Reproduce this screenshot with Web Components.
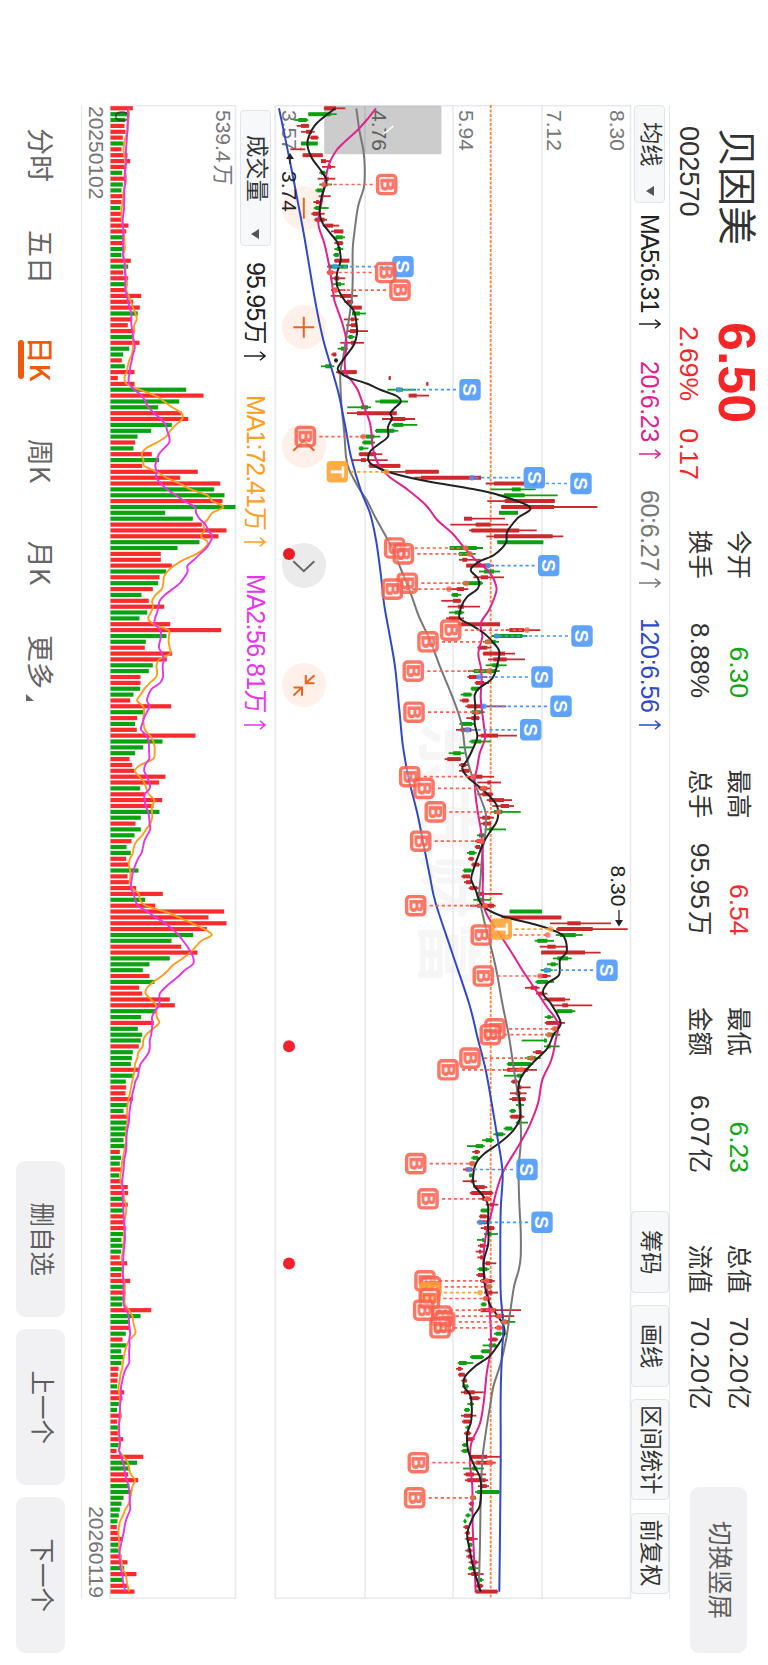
<!DOCTYPE html>
<html lang="zh-CN">
<head>
<meta charset="utf-8">
<title>贝因美 002570</title>
<style>
  html, body {
    margin: 0;
    background: #fff;
  }
  body {
    width: 768px;
    height: 1665px;
    overflow: hidden;
    font-family: "Liberation Sans", "Noto Sans CJK SC", sans-serif;
    color: #333;
  }
</style>
</head>
<body>
<stock-screen></stock-screen>

<script>
// Volumes, one per trading day: r = up, g = down, the number is the bar length
const VOLUME = `r67 g57 g44 r42 r45 r37 g39 r33 r51 r59 r45 g35 r47 g37 g33 r37 r33 g30 r33 r35 r54 r47 g37 r37 g39 g33
r61 g53 r38 r53 g45 r45 r92 r68 r88 g82 r63 r52 r72 g67 r87 g56 g38 r34 g43 r72 r22 r72 g227 r279 g206 g143 r213 r233
g184 g122 g81 r74 g69 r124 g146 r95 r262 r209 r329 g311 g342 r336 g375 g164 g247 r274 r348 r324 g267 g201 r151 r151 r184
g167 r147 g143 r127 g93 r115 r161 g110 g87 r179 r332 g168 g106 r103 r185 r169 g127 g115 r90 r90 g89 g69 r59 r182 g103
r80 g74 r79 r255 g156 g98 g74 r57 r65 r72 r165 r146 g89 r103 r155 r129 g147 g91 r75 g91 g72 r63 g48 g61 r47 r55 g84 r51
r55 r77 r157 g104 r134 r341 r294 r348 r289 g248 g183 r212 r261 g178 g117 g97 r117 g132 r86 r95 r178 r193 g137 g92 r130
g82 g95 g91 r85 g67 g64 g61 r86 g67 g46 r47 r45 r67 g51 g39 r51 g49 g47 g45 g39 g43 r28 g32 g28 r33 g26 r34 r52 r53 g39
r52 g39 r39 r39 r47 g38 g33 g37 g32 r28 r50 g37 r32 r59 g39 r45 g37 g35 r122 g90 g57 r57 g46 r36 g47 g32 g38 g33 r24 r22
r21 g20 r41 r36 g25 g20 r33 r20 g23 r23 r38 g26 r18 r98 g80 g57 r53 r83 g57 g63 g39 g33 g28 g25 g21 r19 r25 r37 g24 g25
r33 r51 g41 r78 g37 r51 r72`;

// Candles: colour, low, body bottom, body top, high
const CANDLES_EARLY = `r143,145,180,208 g97,97,164,182 g55,67,92,97 r62,75,98,100 r75,90,108,116 r100,105,125,128
g75,75,125,125 r43,74,76,88 r80,80,140,140 r135,135,150,165 r138,158,165,178 g130,135,148,150 r125,150,158,178
g130,145,155,168 g118,122,140,140 r128,135,140,164 r112,120,130,135 g113,118,130,158 r106,110,130,146 r115,118,146,153
r140,148,172,190 r165,174,202,202 g172,180,200,207 r175,182,200,202 g175,182,195,202 g172,175,188,188 r174,176,220,220
g153,160,216,216 r152,155,172,180 r162,175,190,208 g168,180,195,206 r165,172,185,208 r164,192,225,245 r205,213,230,232
r225,228,257,257 g228,228,252,270 r204,225,235,248 r210,225,240,242 r212,222,245,276 g214,218,230,236 r193,225,238,264
g185,195,210,215 r166,170,180,182 k174,176,184,186 g135,148,168,175 r180,185,242,242 r338,338,344,344 r451,451,457,457
g334,360,380,420 r398,398,422,459 g298,312,368,396 g214,255,276,285 r213,243,362,362 r318,345,388,417 g347,352,382,424
g297,300,355,367 g253,270,295,313 g258,262,290,297 g248,250,262,277 r248,250,300,319 r228,255,270,335 r278,280,373,373
r315,388,488,488 r415,435,615,615`;

const CANDLES_LATE = `r305,330,420,420 g322,383,410,455 g340,360,422,521 r310,362,512,512 r352,352,510,640 g345,345,402,402
r240,240,264,363 r199,275,320,373 r255,262,406,458 r307,330,506,538 g340,340,478,478 g197,197,278,297 g223,225,262,275
r225,235,250,290 r247,247,318,330 g285,300,330,348 r268,290,312,360 g235,238,293,297 r188,218,240,253 g202,205,222,232
r172,207,230,232 r191,222,240,288 g195,212,235,241 r186,195,225,240 r222,225,348,348 r365,376,420,469 g322,330,415,430
g297,303,335,345 r280,283,310,322 r296,298,363,393 r312,328,368,423 g305,325,345,368 g252,270,335,347 r250,255,280,310
r272,275,300,315 g260,262,285,290 g230,238,262,265 r227,235,253,256 r244,250,300,367 g258,263,290,302 r247,262,285,287
g226,233,265,270 r216,230,262,272 r280,290,342,399 g256,262,292,320 g225,240,242,268 g194,208,230,242 r182,190,230,231
r225,230,245,252 r225,235,255,260 r252,262,295,330 r280,310,320,351 r283,287,310,320 r280,295,325,328 r308,315,360,384
r325,350,375,390 g322,330,355,410 r287,295,318,330 r290,298,320,322 g302,315,325,366 g279,285,300,302 r272,278,295,303
r272,275,288,290 g249,255,272,278 r252,256,268,270 r262,265,285,290 g236,240,262,266 r232,236,258,258 r240,246,262,264
r254,258,280,284 r280,280,300,355 g268,280,300,321 r258,280,330,335 g377,377,474,474 r352,360,532,532 r498,550,590,681
r516,520,626,731 g515,528,575,596 g452,460,490,510 r467,490,515,550 r472,472,603,650 g507,520,552,563 g489,500,515,522
g470,480,500,506 r462,470,490,500 g454,458,492,510 r423,440,460,467 r456,462,480,490 r478,490,543,558 r505,535,552,625
g512,518,565,574 g482,490,500,508 r482,487,530,543 g500,508,522,525 g484,490,510,529 g413,480,488,488 g480,490,500,527
r447,455,472,480 g422,430,455,470 g368,372,440,448 r357,370,432,459 g360,400,415,418 r381,385,400,405 r400,405,412,440
r378,395,410,428 r376,384,424,426 g396,402,412,420 g376,380,392,396 r377,380,415,421 g395,400,412,432 g359,364,384,388
g328,335,358,364 g294,305,325,330 g249,275,297,302 r265,272,284,288 g262,266,282,286 g255,258,272,278 r237,245,265,270
g255,256,266,270 r236,260,270,278 r268,272,302,310 r257,262,325,328 r290,295,318,322 r305,318,328,343 g289,292,315,316
r285,288,308,315 r278,285,312,318 r290,300,330,332 g300,315,322,342 g279,295,300,302 r282,288,302,312 r275,285,292,298
r280,288,300,302 r296,305,318,337 g280,285,310,316 r277,282,298,300 r288,292,325,332 g302,308,320,325 r300,310,325,342
r296,300,316,320 g290,293,305,308 r283,290,335,411 r318,335,360,391 g350,355,372,394 r332,338,352,358 g330,335,352,372
r312,318,338,342 g296,315,335,340 g290,293,318,322 g258,262,296,300 g221,225,248,268 r216,222,232,237 r222,225,242,244
r232,236,248,250 g234,240,252,254 r231,240,272,299 r255,260,284,289 g250,258,265,270 g240,243,255,258 r231,240,262,277
r234,238,258,260 g244,248,254,258 r240,244,258,262 r248,252,268,272 g234,238,248,252 g232,236,250,252 r255,260,310,350
r262,275,325,335 g237,265,280,300 r239,245,270,306 r243,250,305,312 r282,290,308,315 g273,280,345,348 g258,260,275,277
r254,258,268,270 g255,257,264,266 g244,248,256,260 g238,240,246,248 r238,242,252,254 r242,246,256,258 r244,250,268,281
g252,255,264,266 r244,250,262,266 r247,252,262,268 r254,260,278,284 g252,256,275,283 r251,262,285,299 g276,280,294,299
r272,278,295,298 r272,275,340,342`;

// Moving averages as time,price pairs
const MA5 = `325,-146 370,-202 410,-226 440,-229 475,-216 505,-194 535,-174 550,-174 590,-187 640,-193 670,-184 700,-161
730,-139 780,-130 820,-141 860,-140 900,-119 930,-92 960,-84 1000,-81 1035,-91 1070,-116 1102,-138 1115,-134 1132,-109
1150,-54 1170,-9 1188,38 1205,50 1225,31 1240,19 1255,24 1280,12 1310,12 1330,-12 1355,-42 1380,-47 1395,-34 1415,11
1440,110 1470,281 1485,345 1522,438 1555,400 1595,370 1630,365 1665,330 1685,285 1710,260 1735,282 1765,282 1790,250
1820,232 1855,227 1875,262 1900,300 1925,325 1955,346 2000,338 2035,325 2065,285 2085,272 2120,274 2170,272 2210,280
2250,265 2280,250 2305,235 2330,250 2360,285 2390,318 2420,340 2460,340 2490,322 2525,300 2570,282 2620,265 2640,262
2670,275 2700,285 2725,305 2750,360 2770,440 2790,505 2810,540 2855,548 2880,528 2925,525 2950,490 2980,477 3010,500
3040,518 3072,530 3105,508 3145,490 3190,445 3230,412 3265,403 3310,408 3355,408 3395,385 3430,345 3460,302 3490,276
3525,268 3555,270 3585,295 3615,312 3670,312 3730,313 3780,300 3830,300 3870,305 3910,316 3940,335 3975,358 4005,360
4045,335 4070,315 4100,272 4130,243 4160,240 4190,260 4260,262 4300,250 4350,252 4400,272 4440,290 4515,288 4550,268
4600,250 4650,257 4710,270 4775,290`;

const MA20 = `325,-24 360,-52 390,-79 420,-112 450,-142 490,-164 540,-176 600,-186 670,-197 730,-179 790,-166 850,-156
900,-149 930,-139 980,-122 1030,-112 1080,-118 1120,-114 1140,-99 1170,-79 1210,-64 1270,-42 1340,-34 1370,-27 1400,-12
1430,16 1470,72 1515,125 1560,160 1600,205 1640,238 1680,275 1715,315 1760,337 1790,332 1830,315 1870,290 1910,295
1960,283 2000,290 2040,293 2090,290 2140,295 2180,300 2215,303 2260,287 2300,280 2340,272 2390,275 2440,282 2500,292
2570,296 2630,297 2670,296 2720,300 2750,312 2800,345 2850,378 2910,415 2970,455 3020,488 3070,522 3120,515 3180,502
3240,475 3310,462 3380,435 3440,402 3510,360 3570,338 3640,322 3710,305 3790,298 3830,302 3900,314 3980,320 4050,320
4120,308 4200,300 4270,288 4330,262 4390,258 4460,265 4580,266 4710,272 4775,275`;

const MA60 = `325,-83 390,-74 450,-62 500,-58 560,-60 620,-78 700,-89 750,-94 840,-94 900,-97 970,-107 1070,-122 1120,-131
1210,-128 1300,-119 1370,-114 1410,-104 1470,-72 1500,-52 1550,-27 1595,-2 1640,22 1710,52 1780,80 1850,105 1920,138
2000,168 2090,205 2170,232 2260,245 2330,265 2400,292 2440,305 2490,305 2550,296 2630,290 2690,286 2760,300 2830,318
2910,337 3010,355 3110,375 3210,390 3310,405 3410,411 3510,404 3610,406 3690,410 3770,410 3810,404 3860,390 3940,378
4020,366 4090,350 4160,328 4220,318 4300,305 4380,295 4500,290 4630,288 4775,284`;

const MA120 = `325,-315 500,-279 700,-241 900,-207 1020,-182 1170,-139 1270,-118 1370,-99 1470,-70 1540,-42 1620,-24
1720,-10 1810,0 1890,14 2000,33 2140,47 2240,57 2340,75 2440,100 2540,120 2630,138 2710,155 2860,205 3010,255 3110,280
3210,305 3310,323 3410,340 3470,350 3530,356 3630,350 3760,349 3880,350 3980,358 4060,354 4180,350 4380,350 4680,347
4775,346`;

// Trades: kind, day, badge price, fill price
const TRADES = `B,13,8,-181 S,27,57,-147 B,28,5,-162 B,31,48,-146 S,48,258,44 B,56,-236,-62 T,62,-140,8 S,64,591,450
S,63,451,264 B,75,32,245 B,76,58,258 S,78,494,312 B,81,70,247 B,82,25,195 B,89,200,429 S,90,594,338 B,91,132,313
B,96,88,315 S,97,474,285 S,102,531,300 B,103,90,278 S,106,440,250 B,114,77,268 B,116,120,300 B,120,154,343
B,125,110,293 B,136,95,303 B,141,292,491 T,140,352,500 S,147,669,487 B,148,298,468 B,157,333,512 B,158,319,495
B,162,258,443 B,164,192,412 B,180,95,264 S,181,429,255 B,186,132,310 S,190,474,288 B,200,123,308 B,201,140,313
T,202,138,288 B,203,136,305 B,205,119,325 B,206,173,345 B,207,182,362 B,208,168,345 B,231,103,320 B,237,92,266`;

const STEP = 5.863;
const dayX = i => 3.3 + i * STEP;
const split = text => text.trim().split(/\s+/);
const f = n => n.toFixed(1);

// Catmull-Rom spline through the points, as a path
function curve(points) {
  let d = `M${f(points[0][0])} ${f(points[0][1])}`;
  for (let i = 0; i < points.length - 1; i++) {
    const p0 = points[i - 1] || points[i];
    const p1 = points[i];
    const p2 = points[i + 1];
    const p3 = points[i + 2] || p2;
    d += `C${f(p1[0] + (p2[0] - p0[0]) / 6)} ${f(p1[1] + (p2[1] - p0[1]) / 6)} `
       + `${f(p2[0] - (p3[0] - p1[0]) / 6)} ${f(p2[1] - (p3[1] - p1[1]) / 6)} ${f(p2[0])} ${f(p2[1])}`;
  }
  return d;
}

class PriceChart extends HTMLElement {
  constructor() {
    super();
    this.attachShadow({ mode: 'open' });
  }

  connectedCallback() {
    this.shadowRoot.innerHTML = `
      <style>
        :host { display: block; position: relative; height: 356px; }
        svg { display: block; position: relative; overflow: visible; }
        .grid line, .grid rect { stroke: #e8e9f0; stroke-width: 1.6; fill: none; }
        .axis { font-size: 21px; fill: #777; }
        .mark { font-size: 21px; fill: #222; }
        .badge text { font-size: 19px; font-weight: 700; fill: #fff; text-anchor: middle; }
        .badge .buy { font-size: 18px; stroke-width: .7; }
        .watermark { font: 700 64px "Noto Sans CJK SC", sans-serif; letter-spacing: 3px; fill: #f6f6f7; }
        .ma { fill: none; stroke-width: 2; stroke-linejoin: round; }
        pane-controls { position: absolute; left: 80.5px; bottom: 7px; }
      </style>
      <pane-controls></pane-controls>
      <svg width="1494" height="356" viewBox="0 0 1494 356">
        <text class="watermark" x="616" y="206">东方财富</text>
        <g class="grid">
          <rect x=".7" y=".5" width="1492.5" height="355.3"/>
          <line x1="0" x2="1494" y1="89" y2="89"/>
          <line x1="0" x2="1494" y1="178" y2="178"/>
          <line x1="0" x2="1494" y1="266" y2="266"/>
        </g>
        <text class="axis" x="5" y="21.5">8.30</text>
        <text class="axis" x="5" y="84">7.12</text>
        <text class="axis" x="5" y="172.5">5.94</text>
        <text class="axis" x="5" y="259.5">4.76</text>
        <text class="axis" x="5" y="349.5">3.57</text>
        <rect x=".7" y="189.5" width="48.5" height="117.3" rx="1.5" fill="#000" opacity=".2"/>
        <path d="M21 237.5l6 7.5 1.5 2.5" stroke="#fff" stroke-width="1.6" fill="none"/>
        <line x1="0" x2="1493" y1="140.3" y2="140.3" stroke="#ff8240" stroke-width="1.8" stroke-dasharray="3 1.5"/>
        ${this.candles()}
        <path class="ma" stroke="#777" d="${this.average(MA60)}"/>
        <path class="ma" stroke="#e3208f" d="${this.average(MA20)}"/>
        <path class="ma" stroke="#222" d="${this.average(MA5)}"/>
        <path class="ma" stroke="#2f49cc" d="${this.average(MA120)}"/>
        ${this.trades()}
        <text class="mark" x="760.5" y="20">8.30</text>
        <path d="M805 12h14" stroke="#222" stroke-width="1.3"/>
        <path d="M815 8l6.5 4-6.5 4z" fill="#222"/>
        <text class="mark" x="66" y="349.5">3.74</text>
        <path d="M52 341h7" stroke="#222" stroke-width="1.3"/>
        <path d="M54 337l-6 4 6 4z" fill="#222"/>
        <circle cx="449" cy="342" r="6" fill="#e81e26"/>
        <circle cx="941.3" cy="342" r="6" fill="#f5222d"/>
        <circle cx="1158.5" cy="342" r="6" fill="#f5222d"/>
      </svg>
    `;
  }

  priceY(p) {
    return 247 - p / 3;
  }

  candles() {
    const rows = split(CANDLES_EARLY).map(row => [row, -324])
      .concat(split(CANDLES_LATE).map(row => [row, 0]));
    const colors = { r: '#cb2a2c', g: '#0c9f10', k: '#222' };
    return rows.map(([row, shift], i) => {
      const [low, bottom, top, high] = row.slice(1).split(',').map(n => this.priceY(+n + shift));
      const x = dayX(i);
      const color = colors[row[0]];
      return `<path d="M${f(x)} ${f(high)}V${f(low)}" stroke="${color}" stroke-width="1.8"/>`
        + `<path d="M${f(x)} ${f(top)}V${f(bottom)}" stroke="${color}" stroke-width="4"/>`;
    }).join('');
  }

  average(text) {
    return curve(split(text).map(pair => {
      const [t, p] = pair.split(',').map(Number);
      return [t / 3 - 105, this.priceY(p)];
    }));
  }

  trades() {
    const colors = { B: '#ff6250', S: '#4797ff', T: '#ffa231' };
    return split(TRADES).map(row => {
      const [kind, day, badge, fill] = row.split(',');
      const x = dayX(+day);
      const y = this.priceY(+badge);
      const end = this.priceY(+fill);
      const start = end > y ? y + 14 : y - 14;
      const color = colors[kind];
      // buys are framed, the other badges are solid
      const face = kind === 'B'
        ? `<rect x="${f(x - 9.1)}" y="${f(y - 9.1)}" width="18.2" height="18.2" rx="3.2" fill="#ffe9e5" fill-opacity=".5" stroke="${color}" stroke-width="3.4"/>
          <text class="buy" x="${f(x)}" y="${f(y + 6.2)}" style="fill:${color};stroke:${color}">B</text>`
        : `<rect x="${f(x - 10.7)}" y="${f(y - 10.7)}" width="21.4" height="21.4" rx="4" fill="${color}"/>
          <text x="${f(x)}" y="${f(y + 6.7)}">${kind}</text>`;
      return `<g class="badge">
        <path d="M${f(x)} ${f(start)}V${f(end)}" stroke="${color}" stroke-width="1.7" stroke-dasharray="3.2 2.8"/>
        <circle cx="${f(x)}" cy="${f(end)}" r="2.8" fill="${color}" opacity=".8"/>
        <g opacity=".87">${face}</g>
      </g>`;
    }).join('');
  }
}
customElements.define('price-chart', PriceChart);

class VolumeChart extends HTMLElement {
  constructor() {
    super();
    this.attachShadow({ mode: 'open' });
  }

  connectedCallback() {
    const days = split(VOLUME).map(d => ({ up: d[0] === 'r', value: +d.slice(1) }));
    const bars = days.map((d, i) =>
      `<rect x="${f(dayX(i) - 2.1)}" y="${f(125.5 - d.value / 3)}" width="4.2" height="${f(d.value / 3)}" fill="${d.up ? '#fa2b2d' : '#0ba20f'}"/>`
    ).join('');

    this.shadowRoot.innerHTML = `
      <style>
        :host { display: block; height: 126px; }
        svg { display: block; overflow: visible; }
        text { font-size: 21px; fill: #777; }
        path { fill: none; stroke-width: 1.9; stroke-linejoin: round; }
      </style>
      <svg width="1494" height="126" viewBox="0 0 1494 126">
        <rect x=".7" y=".5" width="1492.5" height="125.3" fill="none" stroke="#e8e9ee" stroke-width="1.6"/>
        ${bars}
        <text x="5" y="20">539.4<tspan dx="2">万</tspan></text>
        <text x="5.5" y="121.5" style="fill:#333;fill-opacity:.75">0</text>
        <path stroke="#ff9d1e" d="${this.average(days, 5)}"/>
        <path stroke="#e635ea" d="${this.average(days, 10)}"/>
      </svg>
    `;
  }

  average(days, span) {
    return curve(days.map((_, i) => {
      let sum = 0;
      for (let k = i - span + 1; k <= i; k++) {
        sum += k < 0 ? 50 : days[k].value; // before the first visible day
      }
      return [dayX(i), 125.5 - sum / span / 3];
    }));
  }
}
customElements.define('volume-chart', VolumeChart);

class PaneControls extends HTMLElement {
  constructor() {
    super();
    this.attachShadow({ mode: 'open' });
  }

  connectedCallback() {
    const icons = [
      'M-10.5 0h21',
      'M-10.5 0h21M0-10.5v21',
      'M4.5-10.5L-5.5 0l10 10.5',
      'M-4-10.5L6 0-4 10.5',
      'M-10-10.8l7.8 8.8M-10.3-2h8.3v-8.7M10.3 10.3L2.2 1.8M10.5 1.8H2.2v8.5'
    ];
    this.shadowRoot.innerHTML = `
      <style>
        :host { display: flex; gap: 74.9px; }
        svg { display: block; border-radius: 50%; background: #fff0e9; stroke: #f0631c; fill: none; stroke-width: 2; }
        svg:nth-of-type(4) { background: #ebebeb; stroke: #666; }
      </style>
      ${icons.map(d => `<svg width="44.4" height="44.4" viewBox="-22.2 -22.2 44.4 44.4"><path d="${d}"/></svg>`).join('')}
    `;
  }
}
customElements.define('pane-controls', PaneControls);

class StatItem extends HTMLElement {
  constructor() {
    super();
    this.attachShadow({ mode: 'open' });
  }

  connectedCallback() {
    const color = this.getAttribute('color') || '#333';
    this.shadowRoot.innerHTML = `
      <style>
        :host { display: flex; justify-content: space-between; align-items: center; height: 39px; line-height: 39px; }
        .label { font-size: 24.5px; }
        .value { font-size: 26.5px; color: ${color}; }
        ::slotted(small) { font-size: 24.5px; margin-left: 2px; }
      </style>
      <span class="label">${this.getAttribute('label')}</span>
      <span class="value"><slot></slot></span>
    `;
  }
}
customElements.define('stat-item', StatItem);

class GreyButton extends HTMLElement {
  constructor() {
    super();
    this.attachShadow({ mode: 'open' });
    this.shadowRoot.innerHTML = `
      <style>
        :host {
          display: flex;
          align-items: center;
          justify-content: center;
          box-sizing: border-box;
          border-radius: 9px;
          background: #f1f1f4;
          color: #5c5c5c;
          font-size: 24.5px;
          line-height: 1;
        }
      </style>
      <slot></slot>
    `;
  }
}
customElements.define('grey-button', GreyButton);

class ToolChip extends HTMLElement {
  constructor() {
    super();
    this.attachShadow({ mode: 'open' });
  }

  connectedCallback() {
    const arrow = this.hasAttribute('menu')
      ? '<svg width="10" height="8" viewBox="0 0 10 8"><path d="M0 0h10L5 8z" fill="#555"/></svg>'
      : '';
    this.shadowRoot.innerHTML = `
      <style>
        :host {
          display: flex;
          align-items: center;
          justify-content: center;
          box-sizing: border-box;
          height: 38.5px;
          border: 1.3px solid #e1e4ec;
          border-radius: 4px;
          background: #f7f8fa;
          font-size: 22.3px;
          line-height: 1;
        }
        :host([menu]) { height: 31px; justify-content: space-between; }
      </style>
      <slot></slot>${arrow}
    `;
  }
}
customElements.define('tool-chip', ToolChip);

class TrendValue extends HTMLElement {
  constructor() {
    super();
    this.attachShadow({ mode: 'open' });
    this.shadowRoot.innerHTML = `
      <style>
        :host { display: flex; align-items: center; gap: 7px; font-size: 25px; line-height: 39px; white-space: nowrap; }
        ::slotted(small) { font-size: 24px; }
      </style>
      <span><slot></slot></span>
      <svg width="10" height="22" viewBox="0 0 10 22" fill="none" stroke="currentColor" stroke-width="1.5">
        <path d="M5 22V1.5M.8 6L5 1l4.2 5"/>
      </svg>
    `;
  }
}
customElements.define('trend-value', TrendValue);

class PeriodTab extends HTMLElement {
  constructor() {
    super();
    this.attachShadow({ mode: 'open' });
    this.shadowRoot.innerHTML = `
      <style>
        :host {
          display: flex;
          flex-direction: column;
          align-items: center;
          width: 102px;
          color: #666;
          font-family: "Noto Sans CJK SC", sans-serif;
          font-size: 27px;
          line-height: 34px;
          white-space: nowrap;
        }
        i { width: 39px; height: 6px; border-radius: 3px; }
        :host([active]) { color: #f05a0a; }
        :host([active]) span { font-weight: 500; }
        :host([active]) i { background: #f05a0a; }
      </style>
      <span><slot></slot></span>
      <i></i>
    `;
  }
}
customElements.define('period-tab', PeriodTab);

// The whole screen is laid out in landscape and turned a quarter clockwise
class StockScreen extends HTMLElement {
  constructor() {
    super();
    this.attachShadow({ mode: 'open' });
  }

  connectedCallback() {
    this.shadowRoot.innerHTML = `
      <style>
        :host {
          display: block;
          width: 768px;
          height: 1665px;
          overflow: hidden;
        }
        .stage {
          display: flex;
          flex-direction: column;
          width: 1665px;
          height: 768px;
          transform: translateX(768px) rotate(90deg);
          transform-origin: 0 0;
        }
        header { display: flex; box-sizing: border-box; height: 98px; padding: 0 12px 0 126px; }
        .name { width: 196px; }
        .name b { display: block; margin: 8px 0 0 2px; font-weight: 400; font-size: 39px; line-height: 48px; }
        .name span { display: block; margin-top: 6px; font-size: 27.2px; line-height: 34px; }
        .quote { width: 208px; color: #f82527; }
        .quote b { display: block; margin-top: 7px; font-size: 52px; line-height: 48px; }
        .quote div { display: flex; gap: 27px; margin: 7px 0 0 4px; font-size: 26.5px; line-height: 34px; }
        .stats { display: grid; grid-template-columns: 168px 166px 166px 165px; column-gap: 71.5px; padding-top: 10px; align-content: start; }
        header grey-button { width: 166px; height: 57.6px; margin: 20.6px 0 0 auto; }
        .legend { display: flex; align-items: center; box-sizing: border-box; height: 39px; margin-left: 105px; width: 1494px; }
        .top { border-top: 1.4px solid #e8e9ee; }
        .top tool-chip[menu] { width: 98px; padding: 0 6px 0 16px; margin-right: 11px; }
        .tools { display: flex; gap: 12.3px; margin: 0 5.5px 0 auto; }
        .bottom tool-chip { width: 136px; padding: 0 6px 0 24px; margin: 0 16px 0 5px; }
        .charts { margin-left: 105px; width: 1494px; }
        .ma { display: grid; grid-template-columns: 147px 129px 128px 120px; letter-spacing: -.35px; }
        .vol { display: grid; grid-template-columns: 133px 179px 170px; letter-spacing: -.3px; }
        .dates { display: flex; justify-content: space-between; box-sizing: border-box; height: 28.7px; padding: 0 1px;
          border-bottom: 1.4px solid #e8e9ee; font-size: 21px; line-height: 27px; color: #777; }
        footer { display: flex; flex: 1; padding: 0 12px 0 104px; }
        nav { display: flex; padding-top: 23px; height: 40px; }
        nav svg { margin: 24px 0 0 -16px; }
        .actions { display: flex; gap: 12.3px; margin: 16px 0 0 auto; }
        .actions grey-button { width: 155.7px; height: 49.7px; }
      </style>
      <div class="stage">
        <header>
          <div class="name"><b>贝因美</b><span>002570</span></div>
          <div class="quote"><b>6.50</b><div><span>2.69%</span><span>0.17</span></div></div>
          <div class="stats">
            <stat-item label="今开" color="#10a614">6.30</stat-item>
            <stat-item label="最高" color="#fa2b2d">6.54</stat-item>
            <stat-item label="最低" color="#10a614">6.23</stat-item>
            <stat-item label="总值">70.20<small>亿</small></stat-item>
            <stat-item label="换手">8.88%</stat-item>
            <stat-item label="总手">95.95<small>万</small></stat-item>
            <stat-item label="金额">6.07<small>亿</small></stat-item>
            <stat-item label="流值">70.20<small>亿</small></stat-item>
          </div>
          <grey-button>切换竖屏</grey-button>
        </header>
        <div class="legend top">
          <tool-chip menu>均线</tool-chip>
          <div class="ma">
            <trend-value style="color:#222;letter-spacing:-1.1px">MA5:6.31</trend-value>
            <trend-value style="color:#e3208f">20:6.23</trend-value>
            <trend-value style="color:#777">60:6.27</trend-value>
            <trend-value style="color:#2f49cc">120:6.56</trend-value>
          </div>
          <div class="tools">
            <tool-chip style="width:81.6px">筹码</tool-chip>
            <tool-chip style="width:81.6px">画线</tool-chip>
            <tool-chip style="width:101px">区间统计</tool-chip>
            <tool-chip style="width:81px">前复权</tool-chip>
          </div>
        </div>
        <div class="charts"><price-chart></price-chart></div>
        <div class="legend bottom">
          <tool-chip menu>成交量</tool-chip>
          <div class="vol">
            <trend-value style="color:#222;letter-spacing:-.8px">95.95<small>万</small></trend-value>
            <trend-value style="color:#ff9d1e;letter-spacing:-1px">MA1:72.41<small>万</small></trend-value>
            <trend-value style="color:#e635ea;letter-spacing:-.6px">MA2:56.81<small>万</small></trend-value>
          </div>
        </div>
        <div class="charts">
          <volume-chart></volume-chart>
          <div class="dates"><span>20250102</span><span>20260119</span></div>
        </div>
        <footer>
          <nav>
            <period-tab>分时</period-tab>
            <period-tab>五日</period-tab>
            <period-tab active>日K</period-tab>
            <period-tab>周K</period-tab>
            <period-tab>月K</period-tab>
            <period-tab style="width:96px">更多</period-tab>
            <svg width="7" height="8" viewBox="0 0 7 8"><path d="M7 0v8H0z" fill="#666"/></svg>
          </nav>
          <div class="actions">
            <grey-button>删自选</grey-button>
            <grey-button>上一个</grey-button>
            <grey-button>下一个</grey-button>
          </div>
        </footer>
      </div>
    `;
  }
}
customElements.define('stock-screen', StockScreen);
</script>
</body>
</html>
